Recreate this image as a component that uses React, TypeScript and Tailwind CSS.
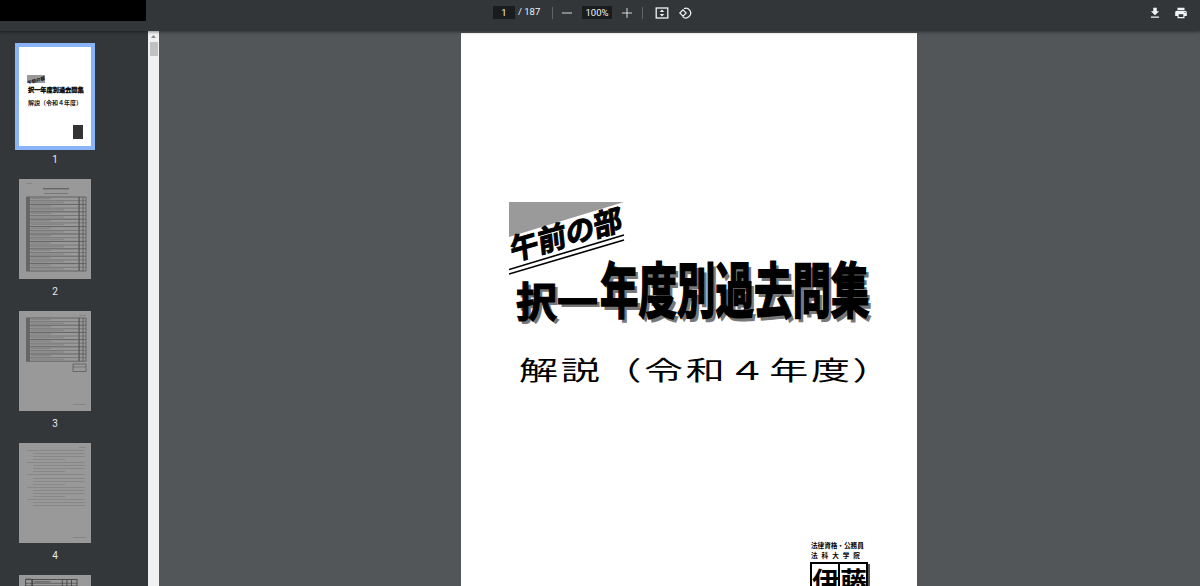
import React from 'react';
import { Minus, Plus } from 'lucide-react';

const jp = "font-['Noto_Sans_CJK_JP','Noto_Sans',sans-serif]";

// table-of-contents style rows used in the dimmed thumbnails
const TableThumb = ({ top, rows, step, right = 67 }: { top: number; rows: number; step: number; right?: number }) => {
  const ys = Array.from({ length: rows + 1 }, (_, i) => top + i * step);
  const bottom = ys[ys.length - 1];
  return (
    <g>
      {ys.map((y, i) => (
        <line key={i} x1="7" x2={right} y1={y} y2={y} stroke="#555" strokeWidth={i % 2 ? 0.5 : 0.8} />
      ))}
      {ys.slice(0, -1).map((y, i) => (
        <rect key={i} x="12" y={y + 1} width={20 + ((i * 13) % 26)} height="1.2" fill="#858585" />
      ))}
      <rect x="7" y={top} width="4" height={bottom - top} fill="#666" />
      <rect x="59.5" y={top} width="1.2" height={bottom - top} fill="#555" />
      <line x1="64" x2="64" y1={top} y2={bottom} stroke="#555" strokeWidth="0.8" />
      <line x1={right} x2={right} y1={top} y2={bottom} stroke="#555" strokeWidth="0.8" />
    </g>
  );
};

const Page2 = () => (
  <svg viewBox="0 0 72 100" className="w-full h-full">
    <rect x="7" y="4" width="6" height="1" fill="#858585" />
    <rect x="24" y="9" width="26" height="1.4" fill="#666" />
    <rect x="25" y="14" width="24" height="1" fill="#777" />
    <TableThumb top={18} rows={20} step={3.7} />
  </svg>
);

const Page3 = () => (
  <svg viewBox="0 0 72 100" className="w-full h-full">
    <rect x="60" y="4" width="7" height="1" fill="#858585" />
    <TableThumb top={7} rows={12} step={3.6} />
    <rect x="54" y="53" width="13" height="7.5" fill="none" stroke="#555" strokeWidth="0.7" />
    <line x1="54" x2="67" y1="56" y2="56" stroke="#555" strokeWidth="0.5" />
    <rect x="54" y="93" width="13" height="1" fill="#858585" />
  </svg>
);

const Page4 = () => {
  const lines = [7, 10, 13, 16, 19, 22, 25, 28, 31, 35, 38, 41, 44, 47, 50, 53, 56, 59, 62];
  return (
    <svg viewBox="0 0 72 100" className="w-full h-full">
      <rect x="60" y="4" width="7" height="1" fill="#858585" />
      {lines.map((y, i) => (
        <rect key={y} x={i % 4 === 0 ? 8 : 14} y={y} width={i % 4 === 3 ? 32 : i % 4 === 0 ? 58 : 52} height="0.9" fill="#858585" />
      ))}
      <rect x="54" y="94" width="13" height="1" fill="#858585" />
    </svg>
  );
};

const Page5 = () => (
  <svg viewBox="0 0 72 12" className="w-full h-full">
    <rect x="4" y="3" width="6" height="1" fill="#777" />
    <rect x="4" y="5" width="56" height="7" fill="none" stroke="#333" strokeWidth="0.8" />
    <line x1="11" x2="11" y1="5" y2="12" stroke="#333" strokeWidth="1.4" />
    <line x1="44" x2="44" y1="5" y2="12" stroke="#333" strokeWidth="0.8" />
    <line x1="49" x2="49" y1="5" y2="12" stroke="#333" strokeWidth="0.8" />
    <line x1="54" x2="54" y1="5" y2="12" stroke="#333" strokeWidth="0.8" />
    <line x1="4" x2="60" y1="9" y2="9" stroke="#333" strokeWidth="0.6" />
    <rect x="13" y="7" width="18" height="1" fill="#555" />
  </svg>
);

const Thumb = ({ label, children }: { label: string; children: React.ReactNode }) => (
  <div className="flex flex-col items-center">
    <div className="w-[72px] h-[100px] bg-[#999999] overflow-hidden">{children}</div>
    <div className="mt-[7px] h-[18px] text-[10px] leading-[12px] text-[#e8eaed] font-['Roboto',sans-serif]">{label}</div>
  </div>
);

const Sidebar = () => (
  <div className="w-[148px] shrink-0 bg-[#33373a] overflow-hidden pt-[12px] pl-[15px]">
    <div className="w-[80px] flex flex-col items-center">
      <div className="w-[80px] h-[107px] border-[4px] border-[#8ab4f8] bg-white flex flex-col overflow-hidden">
        <div className="relative h-[27px] mt-[24px]">
          <div className="absolute left-[8px] top-[4px] w-[18px] h-[8px] bg-[#999]" />
          <div className={`${jp} absolute left-[8px] top-[6px] text-[4.5px] leading-[6px] font-bold text-black whitespace-nowrap -rotate-[16deg]`}>午前の部</div>
        </div>
        <div className={`${jp} -mt-[13px] pl-[9px] text-[6.2px] leading-[10px] font-bold text-black whitespace-nowrap [-webkit-text-stroke:0.3px_#000]`}>択一年度別過去問集</div>
        <div className={`${jp} mt-[4px] pl-[9px] text-[6px] leading-[8px] font-bold text-[#222] whitespace-nowrap`}>解説（令和４年度）</div>
        <div className="mt-[18px] ml-[54px] w-[10px] h-[14px] bg-[#333]" />
      </div>
      <div className="mt-[4px] h-[25px] text-[10px] leading-[12px] text-[#e8eaed] font-['Roboto',sans-serif]">1</div>
      <div className="flex flex-col items-center gap-[7px]">
        <Thumb label="2"><Page2 /></Thumb>
        <Thumb label="3"><Page3 /></Thumb>
        <Thumb label="4"><Page4 /></Thumb>
        <div className="w-[72px] h-[11px] bg-[#999999] overflow-hidden"><Page5 /></div>
      </div>
    </div>
  </div>
);

const Scrollbar = () => (
  <div className="w-[11px] shrink-0 bg-[#f1f1f1] flex flex-col items-center pt-[3px]">
    <svg width="7" height="5" viewBox="0 0 7 5"><path d="M3.5 1 L6 4 H1 Z" fill="#8a8a8a" /></svg>
    <div className="mt-[3px] w-[8px] h-[14px] bg-[#c1c1c1]" />
  </div>
);

const Toolbar = () => (
  <div className="relative z-10 h-[31px] shrink-0 bg-[#323639] shadow-[0_1px_3px_rgba(0,0,0,0.45)] flex text-[#f1f3f4] font-['Roboto',sans-serif]">
    <div className="w-[146px] h-[21px] shrink-0 bg-black" />
    <div className="ml-[347px] h-[25px] flex items-center text-[9.5px]">
      <div className="w-[22px] h-[13px] bg-[#191b1c] flex items-center justify-center leading-none">1</div>
      <span className="ml-[3px] w-[21px] whitespace-nowrap">/ 187</span>
      <div className="ml-[13px] w-px h-[12px] bg-[#5f6368]" />
      <Minus size={16} strokeWidth={1.3} className="ml-[6px]" />
      <div className="ml-[7px] w-[30px] h-[13px] bg-[#191b1c] flex items-center justify-center leading-none">100%</div>
      <Plus size={16} strokeWidth={1.3} className="ml-[7px]" />
      <div className="ml-[7px] w-px h-[12px] bg-[#5f6368]" />
      {/* fit to page */}
      <svg width="14" height="14" viewBox="0 0 14 14" className="ml-[12px]" fill="none">
        <rect x="1.2" y="2" width="11.6" height="10" stroke="currentColor" strokeWidth="1.3" />
        <path d="M7 3.6 L9.2 6 H4.8 Z M7 10.4 L9.2 8 H4.8 Z" fill="currentColor" />
      </svg>
      {/* rotate */}
      <svg width="14" height="14" viewBox="0 0 14 14" className="ml-[10px]" fill="none">
        <path d="M5 2.6 A4.8 4.8 0 1 1 3.6 10.6" stroke="currentColor" strokeWidth="1.2" />
        <path d="M0.8 7 L4 3.8 L7.2 7 L4 10.2 Z" stroke="currentColor" strokeWidth="1.1" fill="#323639" />
      </svg>
    </div>
    <div className="ml-auto h-[25px] flex items-center pr-[12px]">
      <svg width="14" height="14" viewBox="0 0 24 24" fill="currentColor">
        <path d="M19 9h-4V3H9v6H5l7 7 7-7zM5 18v2h14v-2H5z" />
      </svg>
      <svg width="14" height="14" viewBox="0 0 24 24" fill="currentColor" className="ml-[12px]">
        <path d="M19 8H5c-1.66 0-3 1.34-3 3v6h4v4h12v-4h4v-6c0-1.66-1.34-3-3-3zm-3 11H8v-5h8v5zm3-7c-.55 0-1-.45-1-1s.45-1 1-1 1 .45 1 1-.45 1-1 1zm-1-9H6v4h12V3z" />
      </svg>
    </div>
  </div>
);

const CoverPage = () => (
  <div className="w-[456px] h-[700px] shrink-0 bg-white text-black ml-[302px] mt-[2px] flex flex-col">
    {/* morning section banner */}
    <div className="relative ml-[48px] mt-[169px] w-[116px] h-[73px]">
      <svg width="116" height="73" viewBox="0 0 116 73" className="absolute inset-0">
        <polygon points="0,0 115,0 0,35" fill="#9a9a9a" />
        <line x1="0" y1="67.5" x2="115" y2="33" stroke="#000" strokeWidth="1.6" />
        <line x1="0" y1="72" x2="115" y2="38" stroke="#000" strokeWidth="1.6" />
      </svg>
      <div className={`${jp} absolute left-[1px] top-[29px] text-[29px] leading-[34px] font-bold whitespace-nowrap origin-left -rotate-[16deg] -skew-x-[10deg] [-webkit-text-stroke:1px_#000] [text-shadow:1px_1px_0_#fff]`}>
        午前の部
      </div>
    </div>
    {/* main title */}
    <div className={`${jp} -mt-[19px] ml-[55px] h-[66px] flex items-end font-bold whitespace-nowrap [-webkit-text-stroke:1.2px_#000] [text-shadow:3px_3px_0_#777]`}>
      <span className="text-[41px] leading-[46px]">択一</span>
      <span className="ml-[2px] text-[38.5px] leading-[46px] inline-block origin-bottom scale-y-[1.55]">年度別過去問集</span>
    </div>
    {/* subtitle */}
    <div className={`${jp} mt-[31px] ml-[58px] text-[26px] leading-[32px] tracking-[1.8px] whitespace-nowrap origin-left scale-x-[1.5]`}>
      解説（令和４年度）
    </div>
    {/* publisher mark */}
    <div className={`${jp} mt-[155px] ml-[350px] flex flex-col items-start font-bold`}>
      <div className="text-[6.6px] leading-[10px] whitespace-nowrap">法律資格・公務員</div>
      <div className="text-[6.6px] leading-[10px] tracking-[4px] whitespace-nowrap">法科大学院</div>
      <div className="mt-[2px] -ml-[1px] w-[58px] h-[40px] border-[2px] border-black flex text-[27px] leading-[34px] font-bold shadow-[2px_2px_0_#555]">
        <span className="w-[28px] text-center border-r-[2px] border-black">伊</span>
        <span className="w-[26px] text-center">藤</span>
      </div>
    </div>
  </div>
);

export default function App() {
  return (
    <div className="w-[1200px] h-[586px] overflow-hidden flex flex-col bg-[#525659]">
      <Toolbar />
      <div className="flex-1 flex min-h-0">
        <Sidebar />
        <Scrollbar />
        <div className="flex-1 overflow-hidden">
          <CoverPage />
        </div>
      </div>
    </div>
  );
}
